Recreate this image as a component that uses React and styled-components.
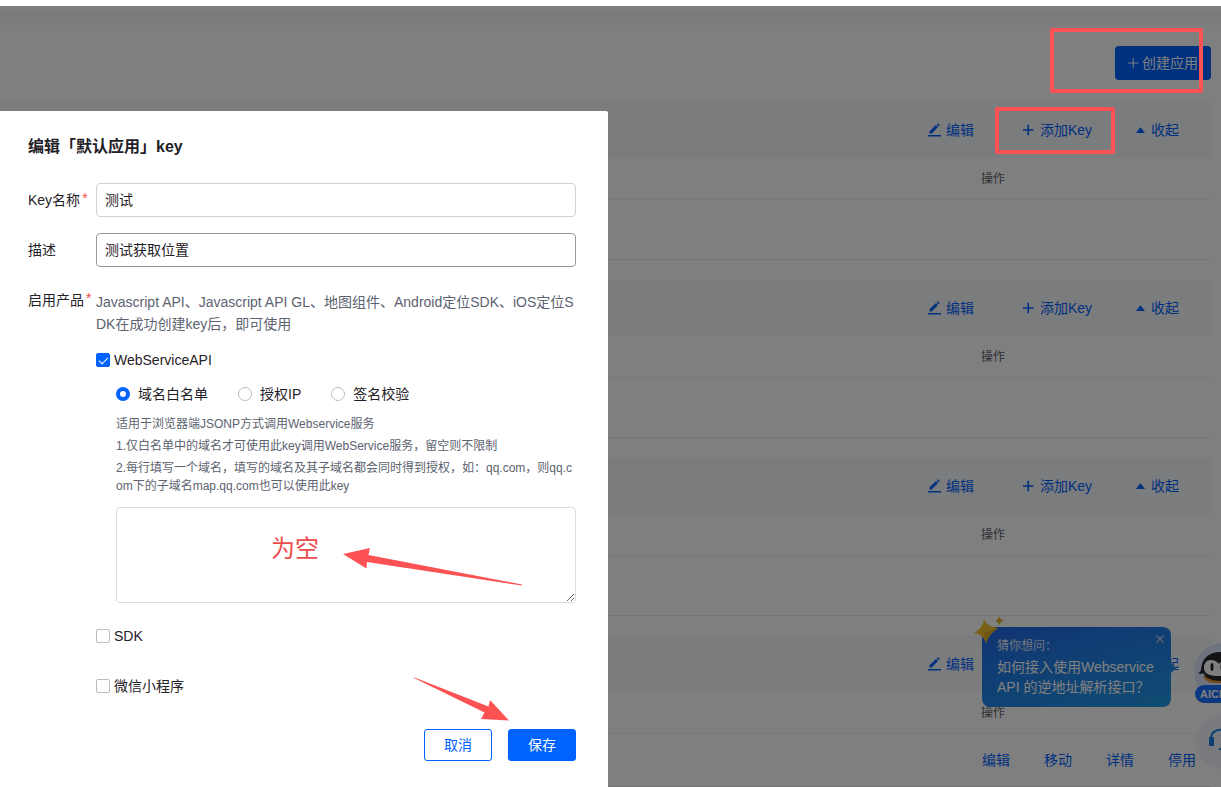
import React from 'react';
import styled, { createGlobalStyle, css } from 'styled-components';

const GlobalStyle = createGlobalStyle`
  *, *::before, *::after { box-sizing: border-box; }
  body {
    margin: 0;
    overflow: hidden;
    background: #fff;
    color: #1f2126;
    font: 14px/20px "Liberation Sans", "Noto Sans CJK SC", sans-serif;
  }
  button, input, textarea { font: inherit; color: inherit; margin: 0; }
  p, h1, h2 { margin: 0; }
`;

const red = '#fc5253';
const blue = '#0062ff';

const Page = styled.main`
  min-height: 100vh;
  padding-top: 6px;
`;

const Strip = styled.div`
  height: 15px;
  margin: 4px 0 0;
  background: #f5f7fb;
`;

const Toolbar = styled.header`
  display: flex;
  justify-content: flex-end;
  padding: 21px 10px 22px;
`;

const CreateButton = styled.button`
  display: flex;
  align-items: center;
  gap: 2px;
  height: 34px;
  padding: 0 13px 0 12px;
  border: 0;
  border-radius: 4px;
  background: ${blue};
  color: #fff;
`;

const AppSection = styled.section`
  padding-right: 10px;
  margin-bottom: 20px;
`;

const Band = styled.div`
  display: grid;
  grid-template-columns: 94px 114px 44px;
  justify-content: end;
  align-items: center;
  height: 56px;
  padding-right: 31px;
  background: #f7f9fc;
`;

const LinkButton = styled.button`
  display: flex;
  align-items: center;
  justify-self: start;
  gap: 5px;
  padding: 0;
  border: 0;
  background: none;
  color: ${blue};
  white-space: nowrap;
`;

const KeyTable = styled.table`
  width: 100%;
  table-layout: fixed;
  border-collapse: separate;
  border-spacing: 0;
  border-bottom: 1px solid #e6e8ec;
`;

const HeadCell = styled.th`
  width: ${(p) => (p.$actions ? '230px' : 'auto')};
  height: 42px;
  padding: 0;
  border-bottom: 1px solid #f1f2f5;
  color: #60646c;
  font-size: 12px;
  font-weight: 400;
  text-align: left;
`;

const BodyCell = styled.td`
  height: ${(p) => (p.$filled ? '52px' : '59px')};
  padding: 0;
`;

const RowLinks = styled.div`
  display: flex;
  gap: 34px;
  padding-left: 1px;
`;

const RowLink = styled.a`
  color: ${blue};
  text-decoration: none;
`;

const Assistant = styled.aside`
  position: fixed;
  right: 50px;
  bottom: 80px;
  width: 189px;
  height: 80px;
  padding: 10px 15px;
  border-radius: 8px;
  background: linear-gradient(165deg, #2068e6, #209ae6);
  color: #fff;
`;

const AssistantLead = styled.p`
  font-size: 12px;
  line-height: 18px;
  opacity: 0.85;
`;

const AssistantText = styled.p`
  margin-top: 2px;
  white-space: nowrap;
`;

const AssistantClose = styled.button`
  position: absolute;
  top: 7px;
  right: 6px;
  display: flex;
  padding: 0;
  border: 0;
  background: none;
`;

const AssistantTail = styled.span`
  position: absolute;
  top: 36px;
  right: -5px;
  border: solid transparent;
  border-width: 5px 0 5px 5px;
  border-left-color: #2090e6;
`;

const Sparkle = styled.svg`
  position: absolute;
  left: -9px;
  top: -11px;
`;

const FloatIcons = styled.div`
  position: fixed;
  right: -32px;
  bottom: 18px;
  display: flex;
  flex-direction: column;
  align-items: center;
  gap: 12px;
  width: 60px;
`;

const Float = styled.button`
  display: flex;
  flex-direction: column;
  align-items: center;
  padding: 0;
  border: 0;
  background: none;
`;

const FloatTag = styled.span`
  width: 56px;
  height: 18px;
  margin-top: -2px;
  padding-left: 5px;
  border-radius: 9px;
  background: #1670ff;
  color: #fff;
  font-size: 11px;
  font-weight: 700;
  line-height: 18px;
  text-align: left;
`;

const Overlay = styled.div`
  position: fixed;
  inset: 6px 0 0;
  background: rgba(0, 0, 0, 0.5);
  overflow: hidden;
`;

const Dialog = styled.form`
  position: absolute;
  top: 105px;
  left: 0;
  width: 608px;
  max-width: 100%;
  min-height: calc(100% - 105px);
  padding: 25px 32px 26px 28px;
  border-top-right-radius: 2px;
  background: #fff;
`;

const Title = styled.h1`
  margin-bottom: 25px;
  font-size: 16px;
  line-height: 22px;
`;

const Field = styled.div`
  display: grid;
  grid-template-columns: 68px 1fr;
  margin-bottom: 16px;
`;

const FieldLabel = styled.label`
  display: flex;
  gap: 2px;
  line-height: 34px;
  white-space: nowrap;
`;

const Required = styled.span`
  color: #f0484d;
  font-size: 14px;
  line-height: 30px;
`;

const TextInput = styled.input`
  width: 100%;
  height: 34px;
  padding: 0 8px 2px;
  border: 1px solid ${(p) => (p.$active ? '#94979c' : '#cfd1d6')};
  border-radius: 4px;
  outline: 0;
  background: #fff;
`;

const Products = styled.div`
  padding-top: 8px;
`;

const Intro = styled.p`
  margin-bottom: 15px;
  color: #5c6270;
  line-height: 22px;
  word-break: break-all;
`;

const Option = styled.label`
  display: flex;
  align-items: center;
  gap: ${(p) => (p.$radio ? '8px' : '4px')};
`;

const tickMark = css`
  &:checked::after {
    content: '';
    width: 9px;
    height: 5px;
    margin-bottom: 2px;
    border: solid #fff;
    border-width: 0 0 1px 1px;
    transform: rotate(-45deg);
  }
`;

const Tick = styled.input`
  appearance: none;
  display: flex;
  align-items: center;
  justify-content: center;
  flex: none;
  width: 14px;
  height: 14px;
  border: 1px solid #b9bcc2;
  border-radius: 2px;
  background: #fff;
  &:checked { border-color: ${blue}; background: ${blue}; }
  ${tickMark}
`;

const Radio = styled.input`
  appearance: none;
  flex: none;
  width: 14px;
  height: 14px;
  border: 1px solid #b9bcc2;
  border-radius: 50%;
  background: #fff;
  &:checked { border: 4px solid ${blue}; }
`;

const Details = styled.div`
  padding: 14px 0 23px 20px;
`;

const RadioRow = styled.div`
  display: flex;
  gap: 30px;
  margin-bottom: 11px;
`;

const Note = styled.p`
  margin-bottom: 4px;
  color: #5c6270;
  font-size: 12px;
  line-height: 18px;
  word-break: break-all;
`;

const DomainBox = styled.textarea`
  display: block;
  width: 100%;
  height: 96px;
  margin-top: 12px;
  border: 1px solid #d9dbdf;
  border-radius: 4px;
  outline: 0;
  resize: vertical;
`;

const OptionStack = styled.div`
  display: flex;
  flex-direction: column;
  gap: 30px;
`;

const Footer = styled.footer`
  display: flex;
  justify-content: flex-end;
  gap: 16px;
  margin-top: 33px;
`;

const Button = styled.button`
  width: 68px;
  height: 32px;
  padding: 0;
  border: 1px solid ${blue};
  border-radius: 3px;
  background: ${(p) => (p.$primary ? blue : '#fff')};
  color: ${(p) => (p.$primary ? '#fff' : blue)};
`;

const MarkBox = styled.div`
  position: absolute;
  top: ${(p) => p.$top}px;
  right: ${(p) => p.$right}px;
  width: ${(p) => p.$w}px;
  height: ${(p) => p.$h}px;
  border: 4px solid ${red};
  border-radius: 2px;
  pointer-events: none;
`;

const MarkText = styled.span`
  position: absolute;
  left: 271px;
  top: 422px;
  color: #ee4c4c;
  font-size: 24px;
  line-height: 32px;
`;

const Arrow = styled.svg`
  position: absolute;
  left: ${(p) => p.$left}px;
  top: ${(p) => p.$top}px;
  fill: ${red};
  pointer-events: none;
`;

const Pencil = () => (
  <svg width="13" height="14" viewBox="0 0 13 14" fill="currentColor" aria-hidden="true">
    <path d="M1.500 10.500V8.300L8 2l2 2-6.300 6.500zM8.700 1.300 9.900.2l2 2-1.200 1.100z" />
    <rect y="12" width="13" height="1.500" />
  </svg>
);

const Plus = ({ weight = 1.6 }) => (
  <svg width="13" height="12" viewBox="0 0 13 12" stroke="currentColor" strokeWidth={weight} aria-hidden="true">
    <path d="M1 6h10.500M6.250 .75v10.500" />
  </svg>
);

const Caret = () => (
  <svg width="10" height="7" viewBox="0 0 10 7" fill="currentColor" aria-hidden="true">
    <path d="M0 6 4 .8q.5-.6 1 0L9 6z" />
  </svg>
);

const Penguin = () => (
  <svg width="60" height="45" viewBox="0 0 60 45" aria-hidden="true">
    <circle cx="30" cy="30" r="29" fill="#dfe6fb" />
    <path d="M10 34q3 7 12 7h16q8-1 11-7z" fill="#e0902c" />
    <path d="M5 31q3-1 3-4Q10 10 28 10t20 17q0 12-20 12-14 0-18-8-2 2-5 0z" fill="#26272c" />
    <path d="M11 26q0-8 7-8 5 0 8 4 3-4 8-4 7 0 7 8 0 8-15 8t-15-8z" fill="#fff" />
    <ellipse cx="19" cy="25" rx="1.500" ry="4" fill="#26272c" />
    <ellipse cx="29" cy="25" rx="1.500" ry="4" fill="#26272c" />
  </svg>
);

const Headset = () => (
  <svg width="60" height="54" viewBox="0 0 60 54" aria-hidden="true">
    <circle cx="30" cy="27" r="27" fill="#f3f5fb" />
    <path d="M17.500 24q1-9.500 11.500-9.500T40.500 24M39 31q0 3-8 3h-5" fill="none" stroke="#1580e8" strokeWidth="2" />
    <rect x="16" y="22" width="5" height="9" rx="1" fill="#1580e8" />
    <rect x="37" y="22" width="5" height="9" rx="1" fill="#1580e8" />
  </svg>
);

const apps = [{ id: 1 }, { id: 2 }, { id: 3 }, { id: 4, links: ['编辑', '移动', '详情', '停用'] }];

function AppBlock({ links }) {
  return (
    <AppSection>
      <Band>
        <LinkButton type="button"><Pencil />编辑</LinkButton>
        <LinkButton type="button"><Plus />添加Key</LinkButton>
        <LinkButton type="button"><Caret />收起</LinkButton>
      </Band>
      <KeyTable>
        <thead>
          <tr><HeadCell /><HeadCell $actions scope="col">操作</HeadCell></tr>
        </thead>
        <tbody>
          <tr>
            <BodyCell $filled={!!links} />
            <BodyCell $filled={!!links}>
              {links && <RowLinks>{links.map((l) => <RowLink href="#" key={l}>{l}</RowLink>)}</RowLinks>}
            </BodyCell>
          </tr>
        </tbody>
      </KeyTable>
    </AppSection>
  );
}

function EditDialog() {
  return (
    <Dialog role="dialog" aria-labelledby="dialog-title">
      <Title id="dialog-title">编辑「默认应用」key</Title>
      <Field>
        <FieldLabel htmlFor="key-name">Key名称<Required>*</Required></FieldLabel>
        <TextInput id="key-name" defaultValue="测试" />
      </Field>
      <Field>
        <FieldLabel htmlFor="key-desc">描述</FieldLabel>
        <TextInput id="key-desc" $active defaultValue="测试获取位置" />
      </Field>
      <Field>
        <FieldLabel as="span">启用产品<Required>*</Required></FieldLabel>
        <Products>
          <Intro>Javascript API、Javascript API GL、地图组件、Android定位SDK、iOS定位SDK在成功创建key后，即可使用</Intro>
          <Option><Tick type="checkbox" defaultChecked />WebServiceAPI</Option>
          <Details>
            <RadioRow>
              <Option $radio><Radio type="radio" name="auth" defaultChecked />域名白名单</Option>
              <Option $radio><Radio type="radio" name="auth" />授权IP</Option>
              <Option $radio><Radio type="radio" name="auth" />签名校验</Option>
            </RadioRow>
            <Note>适用于浏览器端JSONP方式调用Webservice服务</Note>
            <Note>1.仅白名单中的域名才可使用此key调用WebService服务，留空则不限制</Note>
            <Note>2.每行填写一个域名，填写的域名及其子域名都会同时得到授权，如：qq.com，则qq.com下的子域名map.qq.com也可以使用此key</Note>
            <DomainBox aria-label="域名白名单" />
          </Details>
          <OptionStack>
            <Option><Tick type="checkbox" />SDK</Option>
            <Option><Tick type="checkbox" />微信小程序</Option>
          </OptionStack>
        </Products>
      </Field>
      <Footer>
        <Button type="button">取消</Button>
        <Button type="button" $primary>保存</Button>
      </Footer>
      <MarkText>为空</MarkText>
      <Arrow $left={343} $top={436} width="180" height="40" aria-hidden="true">
        <path d="M0 7 27 1 25.500 8 179 37.500v1L24 15 23.500 21.500z" />
      </Arrow>
      <Arrow $left={413} $top={566} width="97" height="44" aria-hidden="true">
        <path d="M0 .5 1.500 .5 75.500 29.500 77 23 96 43.500 68 42 71.500 35.500z" />
      </Arrow>
    </Dialog>
  );
}

export default function App() {
  return (
    <>
      <GlobalStyle />
      <Page>
        <Strip />
        <Toolbar>
          <CreateButton type="button"><Plus weight={1} />创建应用</CreateButton>
        </Toolbar>
        {apps.map((a) => <AppBlock key={a.id} links={a.links} />)}
      </Page>
      <Assistant>
        <AssistantLead>猜你想问：</AssistantLead>
        <AssistantText>如何接入使用Webservice<br />API 的逆地址解析接口？</AssistantText>
        <AssistantClose type="button" aria-label="关闭">
          <svg width="10" height="10" viewBox="0 0 10 10" stroke="#b9d0f5" strokeWidth="1.300"><path d="M1.500 1.500l7 7M8.500 1.500l-7 7" /></svg>
        </AssistantClose>
        <AssistantTail />
        <Sparkle width="32" height="28" viewBox="0 0 32 28" aria-hidden="true">
          <path d="M11 3q3 8 14 9-9 6-12 15-3-9-12-10Q10 12 11 3z" fill="#f3c431" />
          <path d="M13 27q-1-6-3-10l15-5q-9 6-12 15z" fill="#e3aa24" />
          <path d="M26 0q1 4 5 4-4 2-5 5-1-4-4-4 3-1 4-5z" fill="#e3b32a" />
        </Sparkle>
      </Assistant>
      <FloatIcons>
        <Float type="button" aria-label="AI客服"><Penguin /><FloatTag>AICHAT</FloatTag></Float>
        <Float type="button" aria-label="在线客服"><Headset /></Float>
      </FloatIcons>
      <Overlay>
        <EditDialog />
        <MarkBox $top={22} $right={18} $w={153} $h={65} />
        <MarkBox $top={101} $right={106} $w={120} $h={47} />
      </Overlay>
    </>
  );
}
